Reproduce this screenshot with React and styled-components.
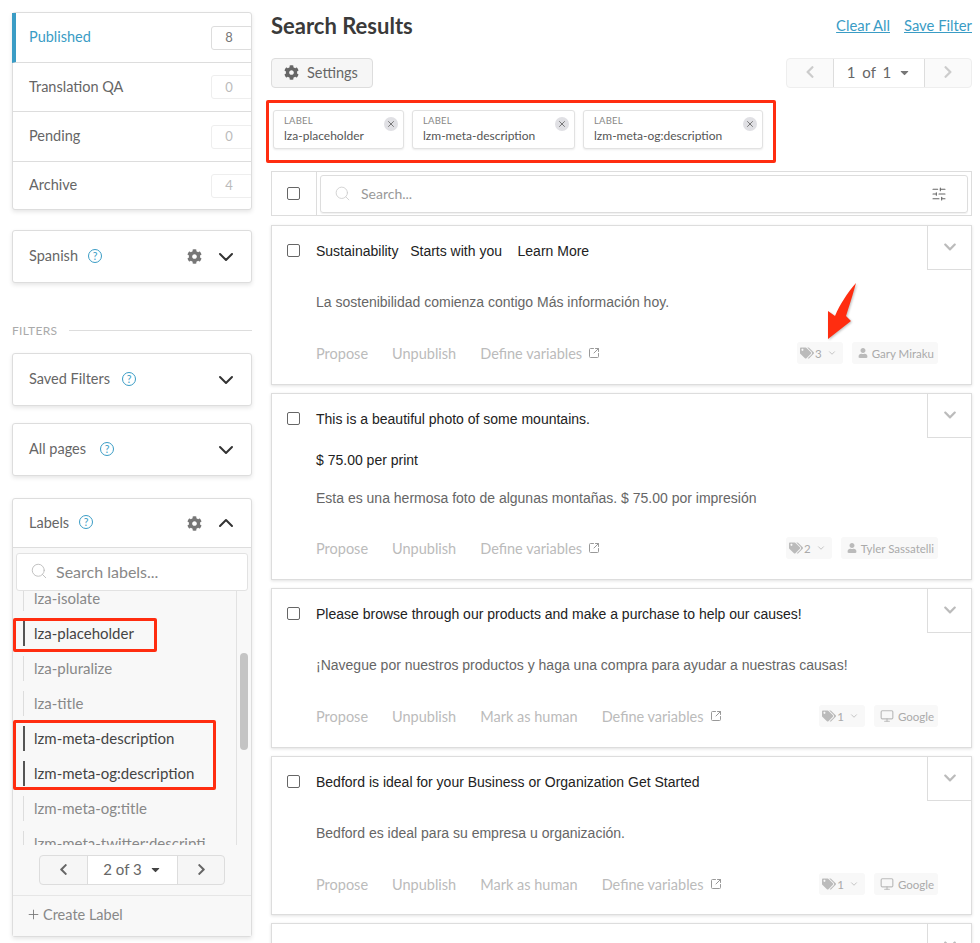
import React from 'react';
import styled, { createGlobalStyle } from 'styled-components';
import { FaCog, FaChevronDown, FaChevronLeft, FaChevronRight, FaTags, FaUser, FaCaretDown } from 'react-icons/fa';
import { Search, SlidersHorizontal, SquareArrowOutUpRight, Monitor, ChevronDown, ChevronUp, Plus, X } from 'lucide-react';

const UI_FONT = `Lato, "Open Sans", sans-serif`;
const BODY_FONT = `"Liberation Sans", Arial, sans-serif`;

const GlobalStyle = createGlobalStyle`
  html, body {
    margin: 0;
    padding: 0;
    background: #fff;
  }
  * {
    box-sizing: border-box;
  }
`;

const Page = styled.div`
  width: 980px;
  height: 943px;
  overflow: hidden;
  display: flex;
  gap: 19px;
  padding: 12px 8px 0 12px;
  font-family: ${UI_FONT};
  color: #555;
`;

const Sidebar = styled.aside`
  width: 240px;
  flex: none;
  display: flex;
  flex-direction: column;
  > * {
    flex: none;
  }
`;

const Panel = styled.section`
  background: #fff;
  border: 1px solid #ddd;
  border-radius: 3px;
  box-shadow: 0 2px 4px rgba(0, 0, 0, 0.1);
  margin-bottom: ${(props) => props.$gap ?? 18}px;
`;

const StatusRow = styled.div`
  height: ${(props) => props.$height}px;
  display: flex;
  align-items: center;
  justify-content: space-between;
  font-size: 14.5px;
  line-height: 17px;
  color: ${(props) => (props.$active ? '#3a9cc5' : '#666')};
  border-left: ${(props) => (props.$active ? '4px solid #3a9cc5' : 'none')};
  padding: 0 0 2px ${(props) => (props.$active ? 13 : 16)}px;
  border-bottom: ${(props) => (props.$last ? 'none' : '1px solid #ddd')};
  margin-left: ${(props) => (props.$active ? -1 : 0)}px;
  overflow: hidden;
`;

const CountBadge = styled.span`
  width: 42px;
  height: 24px;
  margin: 2px -2px 0 0;
  display: flex;
  align-items: center;
  justify-content: center;
  padding-right: 6px;
  border: 1px solid ${(props) => (props.$active ? '#ddd' : '#eee')};
  border-radius: 3px;
  font-size: 13px;
  color: ${(props) => (props.$active ? '#777' : '#bbb')};
`;

const PanelHeader = styled.div`
  height: ${(props) => props.$height || 51}px;
  display: flex;
  align-items: center;
  padding: 0 13px 0 16px;
  font-size: 14.5px;
  color: #666;
`;

const PanelTitle = styled.span`
  margin-top: -2px;
`;

const HelpIcon = styled.span`
  width: 14px;
  height: 14px;
  margin: -2px 0 0 ${(props) => props.$gap || 10}px;
  border: 1px solid #3a9cc5;
  border-radius: 50%;
  display: flex;
  align-items: center;
  justify-content: center;
  font-size: 10.5px;
  color: #3a9cc5;
`;

const HeaderActions = styled.div`
  margin-left: auto;
  display: flex;
  align-items: center;
  gap: 12px;
  color: #333;
`;

const GearIcon = styled(FaCog)`
  color: #777;
`;

const FiltersHeading = styled.div`
  display: flex;
  align-items: center;
  gap: 12px;
  margin: 39px 0 15px;
  height: 16px;
  font-size: 12px;
  letter-spacing: 0.3px;
  color: #aaa;
  &::after {
    content: '';
    flex: 1;
    height: 1px;
    background: #ddd;
  }
`;

const LabelsBody = styled.div`
  background: #f8f8f8;
  border-top: 1px solid #ddd;
  padding-top: 5px;
`;

const LabelSearch = styled.div`
  position: relative;
  z-index: 1;
  height: 38px;
  margin: 0 3px;
  padding: 0 0 2px 13px;
  background: #fff;
  border: 1px solid #e2e2e2;
  border-radius: 3px;
  display: flex;
  align-items: center;
  gap: 8px;
  font-size: 16px;
  color: #888;
  svg {
    color: #bbb;
  }
`;

const LabelList = styled.div`
  position: relative;
  height: 264px;
`;

const LabelScroller = styled.div`
  width: 224px;
  height: 254px;
  overflow: hidden;
  border-right: 1px solid #e2e2e2;
  padding-top: 4px;
  display: flex;
  flex-direction: column;
`;

const LabelItem = styled.div`
  flex: none;
  height: 35px;
  display: flex;
  align-items: center;
  padding: 0 0 1px 11px;
  margin-left: 10px;
  margin-top: ${(props) => props.$offset || 0}px;
  font-size: 15px;
  color: ${(props) => (props.$selected ? '#444' : '#888')};
  white-space: nowrap;
  position: relative;
  &::before {
    content: '';
    position: absolute;
    left: 0;
    top: 5px;
    bottom: 5px;
    width: ${(props) => (props.$selected ? 2 : 1)}px;
    background: ${(props) => (props.$selected ? '#555' : '#ddd')};
  }
`;

const ScrollThumb = styled.div`
  position: absolute;
  left: 227px;
  top: 62px;
  width: 8px;
  height: 97px;
  border-radius: 4px;
  background: #c4c4c4;
`;

const LabelPagerRow = styled.div`
  display: flex;
  justify-content: center;
  padding: 0 13px 10px 13px;
  border-bottom: 1px solid #e6e6e6;
`;

const Pager = styled.div`
  display: flex;
  height: 30px;
  border: 1px solid ${(props) => (props.$muted ? '#eee' : '#ddd')};
  border-radius: 4px;
  background: ${(props) => (props.$muted ? '#fafafa' : '#f6f6f6')};
  color: ${(props) => (props.$muted ? '#ccc' : '#666')};
`;

const PagerArrow = styled.div`
  width: ${(props) => props.$width}px;
  padding-bottom: 2px;
  display: flex;
  align-items: center;
  justify-content: center;
`;

const PagerCurrent = styled.div`
  width: ${(props) => props.$width}px;
  padding-bottom: 2px;
  display: flex;
  align-items: center;
  justify-content: center;
  gap: 7px;
  background: #fff;
  border-left: 1px solid #ddd;
  border-right: 1px solid #ddd;
  font-size: 15px;
  color: #666;
  word-spacing: ${(props) => props.$spacing || 0}px;
  svg {
    color: ${(props) => (props.$muted ? '#777' : '#444')};
  }
`;

const CreateLabel = styled.div`
  height: 40px;
  padding: 0 0 4px 13px;
  display: flex;
  align-items: center;
  gap: 2px;
  font-size: 14.5px;
  color: #888;
  background: #f8f8f8;
  border-radius: 0 0 3px 3px;
  svg {
    color: #777;
  }
`;

const Main = styled.main`
  flex: 1;
  min-width: 0;
  display: flex;
  flex-direction: column;
  > * {
    flex: none;
  }
`;

const TitleRow = styled.div`
  display: flex;
  align-items: center;
  justify-content: space-between;
  height: 30px;
`;

const Title = styled.h1`
  margin: -4px 0 0;
  font-size: 22px;
  font-weight: 700;
  color: #3a3a3a;
`;

const TitleLinks = styled.div`
  display: flex;
  gap: 14px;
  margin-top: -5px;
  font-size: 14.8px;
`;

const TitleLink = styled.a`
  color: #3a9cc5;
  text-decoration: underline;
`;

const ToolRow = styled.div`
  display: flex;
  justify-content: space-between;
  margin-top: 16px;
`;

const SettingsButton = styled.button`
  width: 102px;
  height: 30px;
  padding: 0 0 2px 12px;
  display: flex;
  align-items: center;
  gap: 8px;
  background: #f6f6f6;
  border: 1px solid #ddd;
  border-radius: 4px;
  font-family: ${UI_FONT};
  font-size: 14.5px;
  color: #666;
  svg {
    color: #666;
  }
`;

const ChipBox = styled.div`
  width: 510px;
  height: 63px;
  margin: 12px 0 8px -5px;
  border: 3px solid #ff2d10;
  border-radius: 2px;
  padding: 7px 0 0 4px;
  display: flex;
  gap: 8px;
`;

const Chip = styled.div`
  position: relative;
  width: ${(props) => props.$width}px;
  height: 39px;
  padding: 3px 10px;
  border: 1px solid #e2e2e2;
  border-radius: 3px;
  box-shadow: 0 1px 2px rgba(0, 0, 0, 0.08);
  background: #fff;
`;

const ChipCaption = styled.div`
  font-size: 9.5px;
  line-height: 13px;
  letter-spacing: 0.2px;
  color: #888;
`;

const ChipValue = styled.div`
  font-size: 12px;
  line-height: 18px;
  color: #555;
`;

const ChipClose = styled.span`
  position: absolute;
  top: 6px;
  right: 5px;
  width: 14px;
  height: 14px;
  border-radius: 50%;
  background: #e0e0e4;
  color: #444;
  display: flex;
  align-items: center;
  justify-content: center;
`;

const SearchBar = styled.div`
  height: 45px;
  display: flex;
  align-items: center;
  border: 1px solid #ddd;
  padding-right: 3px;
  margin-bottom: 9px;
`;

const SearchCheckCell = styled.div`
  width: 45px;
  height: 100%;
  flex: none;
  display: flex;
  align-items: center;
  justify-content: center;
  border-right: 1px solid #ddd;
  padding-right: 1px;
`;

const Checkbox = styled.span`
  flex: none;
  width: 13px;
  height: 13px;
  border: 1px solid #666;
  border-radius: 2px;
  background: #fff;
`;

const SearchInput = styled.div`
  flex: 1;
  height: 38px;
  margin-left: 3px;
  display: flex;
  align-items: center;
  padding: 0 20px 0 13px;
  gap: 10px;
  border: 1px solid #ddd;
  border-radius: 3px;
  box-shadow: 0 1px 1px rgba(0, 0, 0, 0.06);
  font-size: 14px;
  color: #999;
  > svg {
    color: #ccc;
  }
`;

const FilterIcon = styled.span`
  margin-left: auto;
  display: flex;
  color: #666;
`;

const Card = styled.article`
  position: relative;
  height: ${(props) => props.$height}px;
  flex: none;
  margin-bottom: 8px;
  padding: 16px 0 0 15px;
  border: 1px solid #ddd;
  box-shadow: 0 1px 3px rgba(0, 0, 0, 0.12);
  background: #fff;
  font-family: ${BODY_FONT};
`;

const CardToggle = styled.div`
  position: absolute;
  top: -1px;
  right: -1px;
  width: 45px;
  height: 45px;
  padding-bottom: 2px;
  display: flex;
  align-items: center;
  justify-content: center;
  border: 1px solid #ddd;
  color: #bbb;
`;

const CardTitleRow = styled.div`
  display: flex;
  align-items: center;
  gap: 16px;
  height: 17px;
  font-size: 14px;
  line-height: 16px;
  color: #222;
  white-space: pre;
`;

const ExtraLine = styled.div`
  margin: 25px 0 0 29px;
  height: 17px;
  font-size: 14px;
  line-height: 17px;
  color: #222;
`;

const Translation = styled.div`
  margin: ${(props) => props.$top}px 0 0 29px;
  height: 17px;
  font-size: 14px;
  line-height: 17px;
  color: #666;
`;

const ActionRow = styled.div`
  display: flex;
  align-items: center;
  height: 26px;
  margin: ${(props) => props.$top}px 33px 0 29px;
  font-family: ${UI_FONT};
  font-size: 14.5px;
  color: #bbb;
`;

const ActionLink = styled.span`
  display: flex;
  align-items: center;
  gap: 6px;
  margin-right: 24px;
  svg {
    color: #999;
  }
`;

const MetaGroup = styled.div`
  margin-left: auto;
  display: flex;
  gap: 9px;
  font-size: 11.5px;
`;

const TagPill = styled.span`
  height: 22px;
  display: flex;
  align-items: center;
  gap: 1px;
  padding: 0 6px 0 3px;
  background: #f8f8f8;
  border-radius: 3px;
  color: #aaa;
  svg {
    color: #bbb;
  }
  svg:last-child {
    margin-left: 4px;
  }
`;

const AuthorPill = styled.span`
  height: 22px;
  display: flex;
  align-items: center;
  gap: 4px;
  padding: 0 4px 0 6px;
  background: #f8f8f8;
  border-radius: 3px;
  color: #aaa;
  svg {
    color: #bbb;
  }
`;

const RedBox = styled.div`
  position: absolute;
  left: ${(props) => props.$left}px;
  top: ${(props) => props.$top}px;
  width: ${(props) => props.$width}px;
  height: ${(props) => props.$height}px;
  border: 3px solid #ff2d10;
  border-radius: 2px;
  pointer-events: none;
`;

const Arrow = styled.svg`
  position: absolute;
  left: 824px;
  top: 281px;
  filter: drop-shadow(1px 1px 1px rgba(0, 0, 0, 0.25));
`;

const statuses = [
  { name: 'Published', count: 8, active: true, height: 50 },
  { name: 'Translation QA', count: 0, height: 49 },
  { name: 'Pending', count: 0, height: 50 },
  { name: 'Archive', count: 4, height: 47, last: true },
];

const labels = [
  { name: 'lza-isolate' },
  { name: 'lza-placeholder', selected: true },
  { name: 'lza-pluralize' },
  { name: 'lza-title' },
  { name: 'lzm-meta-description', selected: true },
  { name: 'lzm-meta-og:description', selected: true },
  { name: 'lzm-meta-og:title' },
  { name: 'lzm-meta-twitter:descripti' },
];

const chips = [
  { value: 'lza-placeholder', width: 131 },
  { value: 'lzm-meta-description', width: 163 },
  { value: 'lzm-meta-og:description', width: 180 },
];

const results = [
  {
    title: 'Sustainability   Starts with you    Learn More',
    translation: 'La sostenibilidad comienza contigo Más información hoy.',
    height: 160,
    tags: 3,
    author: 'Gary Miraku',
  },
  {
    title: 'This is a beautiful photo of some mountains.',
    extra: '$ 75.00 per print',
    translation: 'Esta es una hermosa foto de algunas montañas. $ 75.00 por impresión',
    height: 187,
    tags: 2,
    author: 'Tyler Sassatelli',
  },
  {
    title: 'Please browse through our products and make a purchase to help our causes!',
    translation: '¡Navegue por nuestros productos y haga una compra para ayudar a nuestras causas!',
    height: 160,
    tags: 1,
    author: 'Google',
    machine: true,
  },
  {
    title: 'Bedford is ideal for your Business or Organization Get Started',
    translation: 'Bedford es ideal para su empresa u organización.',
    height: 159,
    tags: 1,
    author: 'Google',
    machine: true,
  },
];

function ResultCard({ item }) {
  return (
    <Card $height={item.height}>
      <CardToggle>
        <FaChevronDown size={14} />
      </CardToggle>
      <CardTitleRow>
        <Checkbox />
        {item.title}
      </CardTitleRow>
      {item.extra && <ExtraLine>{item.extra}</ExtraLine>}
      <Translation $top={item.extra ? 21 : 35}>{item.translation}</Translation>
      <ActionRow $top={item.extra ? 28 : 29}>
        <ActionLink>Propose</ActionLink>
        <ActionLink>Unpublish</ActionLink>
        {item.machine && <ActionLink>Mark as human</ActionLink>}
        <ActionLink>
          Define variables <SquareArrowOutUpRight size={12} />
        </ActionLink>
        <MetaGroup>
          <TagPill>
            <FaTags size={14} />
            {item.tags}
            <ChevronDown size={10} />
          </TagPill>
          <AuthorPill>
            {item.machine ? <Monitor size={14} /> : <FaUser size={10} />}
            {item.author}
          </AuthorPill>
        </MetaGroup>
      </ActionRow>
    </Card>
  );
}

export default function App() {
  return (
    <Page>
      <GlobalStyle />
      <Sidebar>
        <Panel $gap={20}>
          {statuses.map((status) => (
            <StatusRow key={status.name} $active={status.active} $last={status.last} $height={status.height}>
              {status.name}
              <CountBadge $active={status.active}>{status.count}</CountBadge>
            </StatusRow>
          ))}
        </Panel>
        <Panel $gap={0}>
          <PanelHeader>
            <PanelTitle>Spanish</PanelTitle>
            <HelpIcon>?</HelpIcon>
            <HeaderActions>
              <GearIcon size={15} />
              <ChevronDown size={24} strokeWidth={2} />
            </HeaderActions>
          </PanelHeader>
        </Panel>
        <FiltersHeading>FILTERS</FiltersHeading>
        <Panel $gap={17}>
          <PanelHeader>
            <PanelTitle>Saved Filters</PanelTitle>
            <HelpIcon $gap={12}>?</HelpIcon>
            <HeaderActions>
              <ChevronDown size={24} strokeWidth={2} />
            </HeaderActions>
          </PanelHeader>
        </Panel>
        <Panel $gap={22}>
          <PanelHeader>
            <PanelTitle>All pages</PanelTitle>
            <HelpIcon $gap={14}>?</HelpIcon>
            <HeaderActions>
              <ChevronDown size={24} strokeWidth={2} />
            </HeaderActions>
          </PanelHeader>
        </Panel>
        <Panel $gap={0}>
          <PanelHeader $height={48}>
            <PanelTitle>Labels</PanelTitle>
            <HelpIcon $gap={10}>?</HelpIcon>
            <HeaderActions>
              <GearIcon size={15} />
              <ChevronUp size={24} strokeWidth={2} />
            </HeaderActions>
          </PanelHeader>
          <LabelsBody>
            <LabelSearch>
              <Search size={18} strokeWidth={1.2} />
              Search labels...
            </LabelSearch>
            <LabelList>
              <LabelScroller>
                {labels.map((label, index) => (
                  <LabelItem key={label.name} $selected={label.selected} $offset={index === 0 ? -14 : 0}>
                    {label.name}
                  </LabelItem>
                ))}
              </LabelScroller>
              <ScrollThumb />
            </LabelList>
            <LabelPagerRow>
              <Pager>
                <PagerArrow $width={47}>
                  <FaChevronLeft size={13} />
                </PagerArrow>
                <PagerCurrent $width={91}>
                  2 of 3
                  <FaCaretDown size={13} />
                </PagerCurrent>
                <PagerArrow $width={46}>
                  <FaChevronRight size={13} />
                </PagerArrow>
              </Pager>
            </LabelPagerRow>
            <CreateLabel>
              <Plus size={15} strokeWidth={1.4} />
              Create Label
            </CreateLabel>
          </LabelsBody>
        </Panel>
        <RedBox $left={13} $top={618} $width={144} $height={34} />
        <RedBox $left={13} $top={720} $width={203} $height={70} />
      </Sidebar>
      <Main>
        <TitleRow>
          <Title>Search Results</Title>
          <TitleLinks>
            <TitleLink>Clear All</TitleLink>
            <TitleLink>Save Filter</TitleLink>
          </TitleLinks>
        </TitleRow>
        <ToolRow>
          <SettingsButton>
            <FaCog size={15} />
            Settings
          </SettingsButton>
          <Pager $muted>
            <PagerArrow $width={46}>
              <FaChevronLeft size={14} />
            </PagerArrow>
            <PagerCurrent $width={92} $muted $spacing={3}>
              1 of 1
              <FaCaretDown size={13} />
            </PagerCurrent>
            <PagerArrow $width={46}>
              <FaChevronRight size={14} />
            </PagerArrow>
          </Pager>
        </ToolRow>
        <ChipBox>
          {chips.map((chip) => (
            <Chip key={chip.value} $width={chip.width}>
              <ChipCaption>LABEL</ChipCaption>
              <ChipValue>{chip.value}</ChipValue>
              <ChipClose>
                <X size={10} strokeWidth={1.6} />
              </ChipClose>
            </Chip>
          ))}
        </ChipBox>
        <SearchBar>
          <SearchCheckCell>
            <Checkbox />
          </SearchCheckCell>
          <SearchInput>
            <Search size={17} strokeWidth={1.2} />
            Search...
            <FilterIcon>
              <SlidersHorizontal size={16} strokeWidth={1.6} />
            </FilterIcon>
          </SearchInput>
        </SearchBar>
        {results.map((item) => (
          <ResultCard key={item.title} item={item} />
        ))}
        <Card $height={60}>
          <CardToggle>
            <FaChevronDown size={14} />
          </CardToggle>
        </Card>
      </Main>
      <Arrow width="34" height="60" viewBox="0 0 34 60">
        <path d="M32 2 C29 13 25 26 22 35 L27 40 L4 58 L4 30 L11 35 C16 23 24 11 32 2 Z" fill="#ff2d10" />
      </Arrow>
    </Page>
  );
}
